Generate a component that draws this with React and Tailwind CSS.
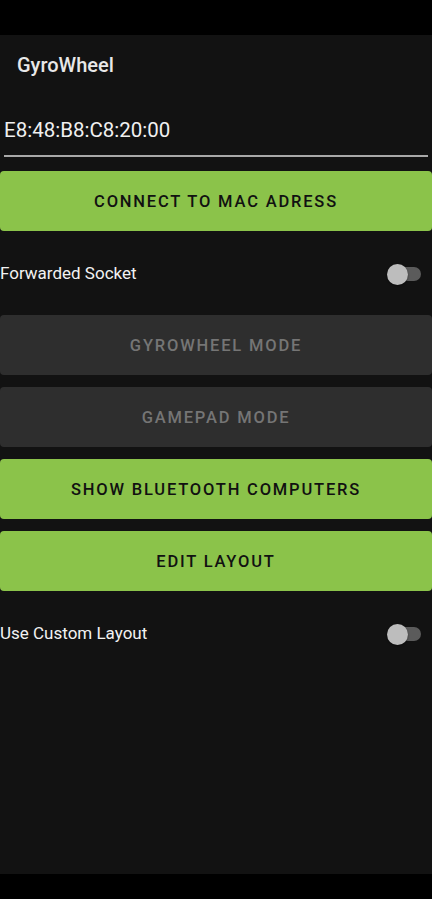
import React from "react";

function Toggle() {
  return (
    <div className="relative w-[34px] h-[22px] flex items-center">
      <div className="absolute left-[1px] right-0 h-[14px] rounded-full bg-[#5b5b5b]" />
      <div className="absolute left-0 w-[21px] h-[21px] rounded-full bg-[#bdbdbd] shadow-[0_1px_2px_rgba(0,0,0,0.5)]" />
    </div>
  );
}

function Btn({ children, disabled }) {
  return (
    <button
      className={
        disabled
          ? "w-full h-[60px] pt-[2px] rounded-[4px] bg-[#2e2e2e] text-[#757575] text-[16.5px] font-medium tracking-[0.11em] flex items-center justify-center"
          : "w-full h-[60px] pt-[2px] rounded-[4px] bg-[#8bc34a] text-[#111111] text-[16.5px] font-medium tracking-[0.11em] flex items-center justify-center"
      }
      style={{ fontFamily: "Roboto, 'Noto Sans', sans-serif" }}
    >
      {children}
    </button>
  );
}

export default function App() {
  return (
    <div
      className="w-[432px] h-[899px] bg-black flex flex-col"
      style={{ fontFamily: "Roboto, 'Noto Sans', sans-serif" }}
    >
      <div className="h-[35px] bg-black" />
      <div className="h-[839px] bg-[#121212] flex flex-col">
        <div className="h-[60px] flex items-center pl-[17px] text-[20px] font-medium text-[#e8e8e8]">
          GyroWheel
        </div>
        <div className="mx-[4px] h-[62px] border-b-2 border-[#a8a8a8] flex items-end pb-[9px] text-[20.5px] text-[#f0f0f0]">
          E8:48:B8:C8:20:00
        </div>
        <div className="h-[14px]" />
        <Btn>CONNECT TO MAC ADRESS</Btn>
        <div className="h-[84px] pt-[2px] flex items-center justify-between pr-[11px]">
          <span className="text-[17px] text-[#f2f2f2]">Forwarded Socket</span>
          <Toggle />
        </div>
        <div className="flex flex-col gap-[12px]">
          <Btn disabled>GYROWHEEL MODE</Btn>
          <Btn disabled>GAMEPAD MODE</Btn>
          <Btn>SHOW BLUETOOTH COMPUTERS</Btn>
          <Btn>EDIT LAYOUT</Btn>
        </div>
        <div className="h-[84px] pt-[2px] flex items-center justify-between pr-[11px]">
          <span className="text-[17px] text-[#f2f2f2]">Use Custom Layout</span>
          <Toggle />
        </div>
      </div>
      <div className="flex-1 bg-black" />
    </div>
  );
}
